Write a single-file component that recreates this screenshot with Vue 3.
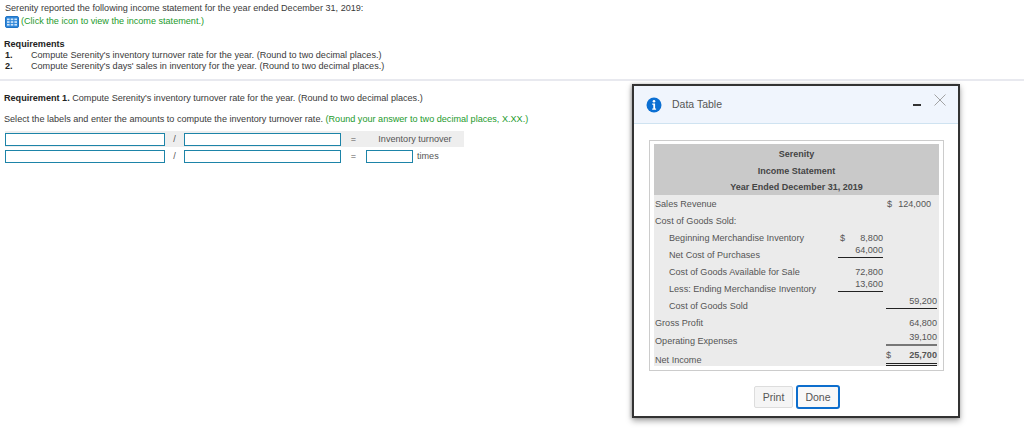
<script setup>
const rows = [
  { label: 'Sales Revenue', d2: '$', v2: '124,000', cls: 'sales' },
  { label: 'Cost of Goods Sold:' },
  { label: 'Beginning Merchandise Inventory', indent: true, d1: '$', v1: '8,800' },
  { label: 'Net Cost of Purchases', indent: true, v1: '64,000', u1: true },
  { label: 'Cost of Goods Available for Sale', indent: true, v1: '72,800' },
  { label: 'Less: Ending Merchandise Inventory', indent: true, v1: '13,600', u1: true },
  { label: 'Cost of Goods Sold', indent: true, v2: '59,200', u2: 'ul' },
  { label: 'Gross Profit', v2: '64,800', cls: 'gross' },
  { label: 'Operating Expenses', v2: '39,100', u2: 'ul thick' },
  { label: 'Net Income', d2: '$', v2: '25,700', u2: 'ul dbl', cls: 'net' }
]
</script>

<template>
  <div class="page">
    <section class="intro">
      <p>Serenity reported the following income statement for the year ended December 31, 2019:</p>
      <p class="hint">
        <svg class="grid-icon" width="14" height="12" viewBox="0 0 14 12">
          <rect x="0.5" y="0.5" width="13" height="11" rx="1.5" fill="#2f86d8" stroke="#1f74c6" />
          <g fill="#cfe6fb">
            <rect x="2" y="2.5" width="2.6" height="1.7" /><rect x="5.7" y="2.5" width="2.6" height="1.7" /><rect x="9.4" y="2.5" width="2.6" height="1.7" />
            <rect x="2" y="5.2" width="2.6" height="1.7" /><rect x="5.7" y="5.2" width="2.6" height="1.7" /><rect x="9.4" y="5.2" width="2.6" height="1.7" />
            <rect x="2" y="7.9" width="2.6" height="1.7" /><rect x="5.7" y="7.9" width="2.6" height="1.7" /><rect x="9.4" y="7.9" width="2.6" height="1.7" />
          </g>
        </svg>
        <span class="green">(Click the icon to view the income statement.)</span>
      </p>
      <p class="req-title"><b>Requirements</b></p>
      <ol class="req-list">
        <li><b>1.</b><span>Compute Serenity's inventory turnover rate for the year. (Round to two decimal places.)</span></li>
        <li><b>2.</b><span>Compute Serenity's days' sales in inventory for the year. (Round to two decimal places.)</span></li>
      </ol>
    </section>

    <section class="work">
      <p><b>Requirement 1.</b> Compute Serenity's inventory turnover rate for the year. (Round to two decimal places.)</p>
      <p class="select">Select the labels and enter the amounts to compute the inventory turnover rate. <span class="green">(Round your answer to two decimal places, X.XX.)</span></p>
      <div class="formula">
        <div class="f-row shaded">
          <span class="box wide"></span><span class="op">/</span><span class="box wide2"></span><span class="eq">=</span><span class="result">Inventory turnover</span>
        </div>
        <div class="f-row">
          <span class="box wide"></span><span class="op">/</span><span class="box wide2"></span><span class="eq">=</span><span class="box small"></span><span class="times">times</span>
        </div>
      </div>
    </section>

    <div class="modal">
      <header class="m-head">
        <svg class="info" width="16" height="16" viewBox="0 0 16 16">
          <circle cx="8" cy="8" r="7.5" fill="#0b6fd3" />
          <circle cx="8" cy="4.3" r="1.3" fill="#fff" />
          <path d="M6.2 6.6h2.9v5h1v1.2H6.2v-1.2h1.1V7.8H6.2z" fill="#fff" />
        </svg>
        <span class="m-title">Data Table</span>
        <span class="minus"></span>
        <svg class="close" width="12" height="12" viewBox="0 0 12 12">
          <path d="M0.5 0.5L11.5 11.5M11.5 0.5L0.5 11.5" stroke="#9a9a9a" stroke-width="0.9" fill="none" />
        </svg>
      </header>
      <div class="m-body">
        <div class="statement">
          <div class="st-head">
            <div>Serenity</div>
            <div>Income Statement</div>
            <div>Year Ended December 31, 2019</div>
          </div>
          <div class="st-rows">
            <div v-for="r in rows" :key="r.label" class="st-row" :class="r.cls">
              <span class="lab" :class="{ indent: r.indent }">{{ r.label }}</span>
              <span class="cell c1" :class="{ ul: r.u1 }"><i>{{ r.d1 }}</i><em>{{ r.v1 }}</em></span>
              <span class="cell c2" :class="r.u2"><i>{{ r.d2 }}</i><em>{{ r.v2 }}</em></span>
            </div>
          </div>
        </div>
        <div class="actions">
          <button class="btn">Print</button>
          <button class="btn done">Done</button>
        </div>
      </div>
    </div>
  </div>
</template>

<style>
html, body { margin: 0; background: #fff; overflow: hidden; }
</style>

<style scoped>
.page {
  position: relative;
  width: 1024px;
  height: 438px;
  overflow: hidden;
  font-family: "Liberation Sans", Arial, sans-serif;
  font-size: 9.1px;
  line-height: 13px;
  color: #3a3a3a;
}
p { margin: 0; }
b { color: #222; }
.green { color: #1d9a2c; }
.intro {
  padding: 2px 0 7px 5px;
  height: 70px;
  border-bottom: 2px solid #e8e9ef;
}
.hint { display: flex; align-items: center; gap: 2px; height: 13px; }
.grid-icon { flex: none; }
.req-title { margin-top: 10px; margin-left: -1px; }
.req-list { list-style: none; margin: -1px 0 0; padding: 0; }
.req-list li { display: flex; height: 11px; line-height: 11px; }
.req-list b { width: 26px; flex: none; }
.work { padding: 11px 0 0 4px; }
.select { margin-top: 8px; }
.formula { margin-top: 5px; margin-left: 1px; width: 459px; }
.f-row { display: flex; align-items: center; height: 15px; color: #555; }
.f-row + .f-row { margin-top: 2px; height: 14px; }
.shaded { background: #eeeeee; height: 16px; }
.box { height: 11px; border: 1px solid #1d84a8; background: #fff; box-sizing: content-box; flex: none; }
.wide { width: 158px; }
.wide2 { width: 155px; }
.small { width: 45px; }
.op { width: 19px; text-align: center; flex: none; }
.eq { width: 25px; text-align: center; flex: none; }
.result { width: 110px; text-align: center; }
.times { margin-left: 4px; }

.modal {
  position: absolute;
  left: 632px;
  top: 84px;
  width: 328px;
  height: 334px;
  box-sizing: border-box;
  border: 2px solid #333;
  background: #fff;
  box-shadow: 0 3px 6px rgba(0, 0, 0, 0.35), -1px 0 3px rgba(0, 0, 0, 0.2);
}
.m-head {
  display: flex;
  align-items: center;
  height: 37px;
  padding: 0 12px 0 12px;
  background: #f0f5fd;
  border-bottom: 1px solid #cfe3f1;
}
.info { flex: none; margin-right: 10px; }
.m-title { font-size: 10.5px; color: #555; flex: 1; }
.minus { width: 8px; height: 2px; background: #333; margin-right: 13px; }
.close { margin-top: -10px; }
.m-body { padding: 16px 15px 0; }
.statement {
  border: 1px solid #ccc;
  padding: 3px 4px;
  width: 295px;
  height: 231px;
  box-sizing: border-box;
  margin: 0 auto 0 0;
}
.st-head {
  background: #c9c9c9;
  height: 51px;
  padding-top: 2px;
  box-sizing: border-box;
  text-align: center;
  font-weight: 700;
  color: #444;
  font-size: 9px;
}
.st-head div { height: 16.5px; line-height: 16px; }
.st-rows { background: #ebebeb; height: 171px; color: #555; }
.st-row {
  display: grid;
  grid-template-columns: 184px 45px 54px;
  height: 17px;
  align-items: center;
  line-height: 12px;
}
.gross { height: 18px; }
.lab { padding-left: 1px; white-space: nowrap; }
.lab.indent { padding-left: 15px; }
.cell { display: flex; justify-content: space-between; align-items: center; }
.cell i { font-style: normal; }
.cell em { font-style: normal; }
.c2 { margin-left: 3px; }
.sales .c2 { padding-right: 6px; margin-left: 3px; }
.sales .c2 i { margin-left: 1px; }
.c1 i { margin-left: 2px; }
.ul {
  align-self: start;
  margin-top: -2px;
  padding-bottom: 1px;
  border-bottom: 1px solid #222;
}
.ul.thick { border-bottom: 2px solid #777; margin-top: -1px; }
.ul.dbl { border-bottom: 3px double #222; font-weight: 700; margin-top: 0; padding-bottom: 2px; }
.ul.dbl i { font-weight: 400; }
.net .lab { align-self: end; }
.actions { display: flex; justify-content: center; align-items: center; gap: 3px; margin-top: 14px; margin-left: 2px; }
.btn {
  font-family: inherit;
  font-size: 10.5px;
  color: #555;
  background: #f5f5f5;
  border: 1px solid #ddd;
  border-radius: 2px;
  height: 22px;
  width: 39px;
  padding: 0;
}
.done {
  height: 24px;
  width: 44px;
  border: 2px solid #0d6ecd;
  border-radius: 3px;
  background: #f8f8f8;
}
</style>
